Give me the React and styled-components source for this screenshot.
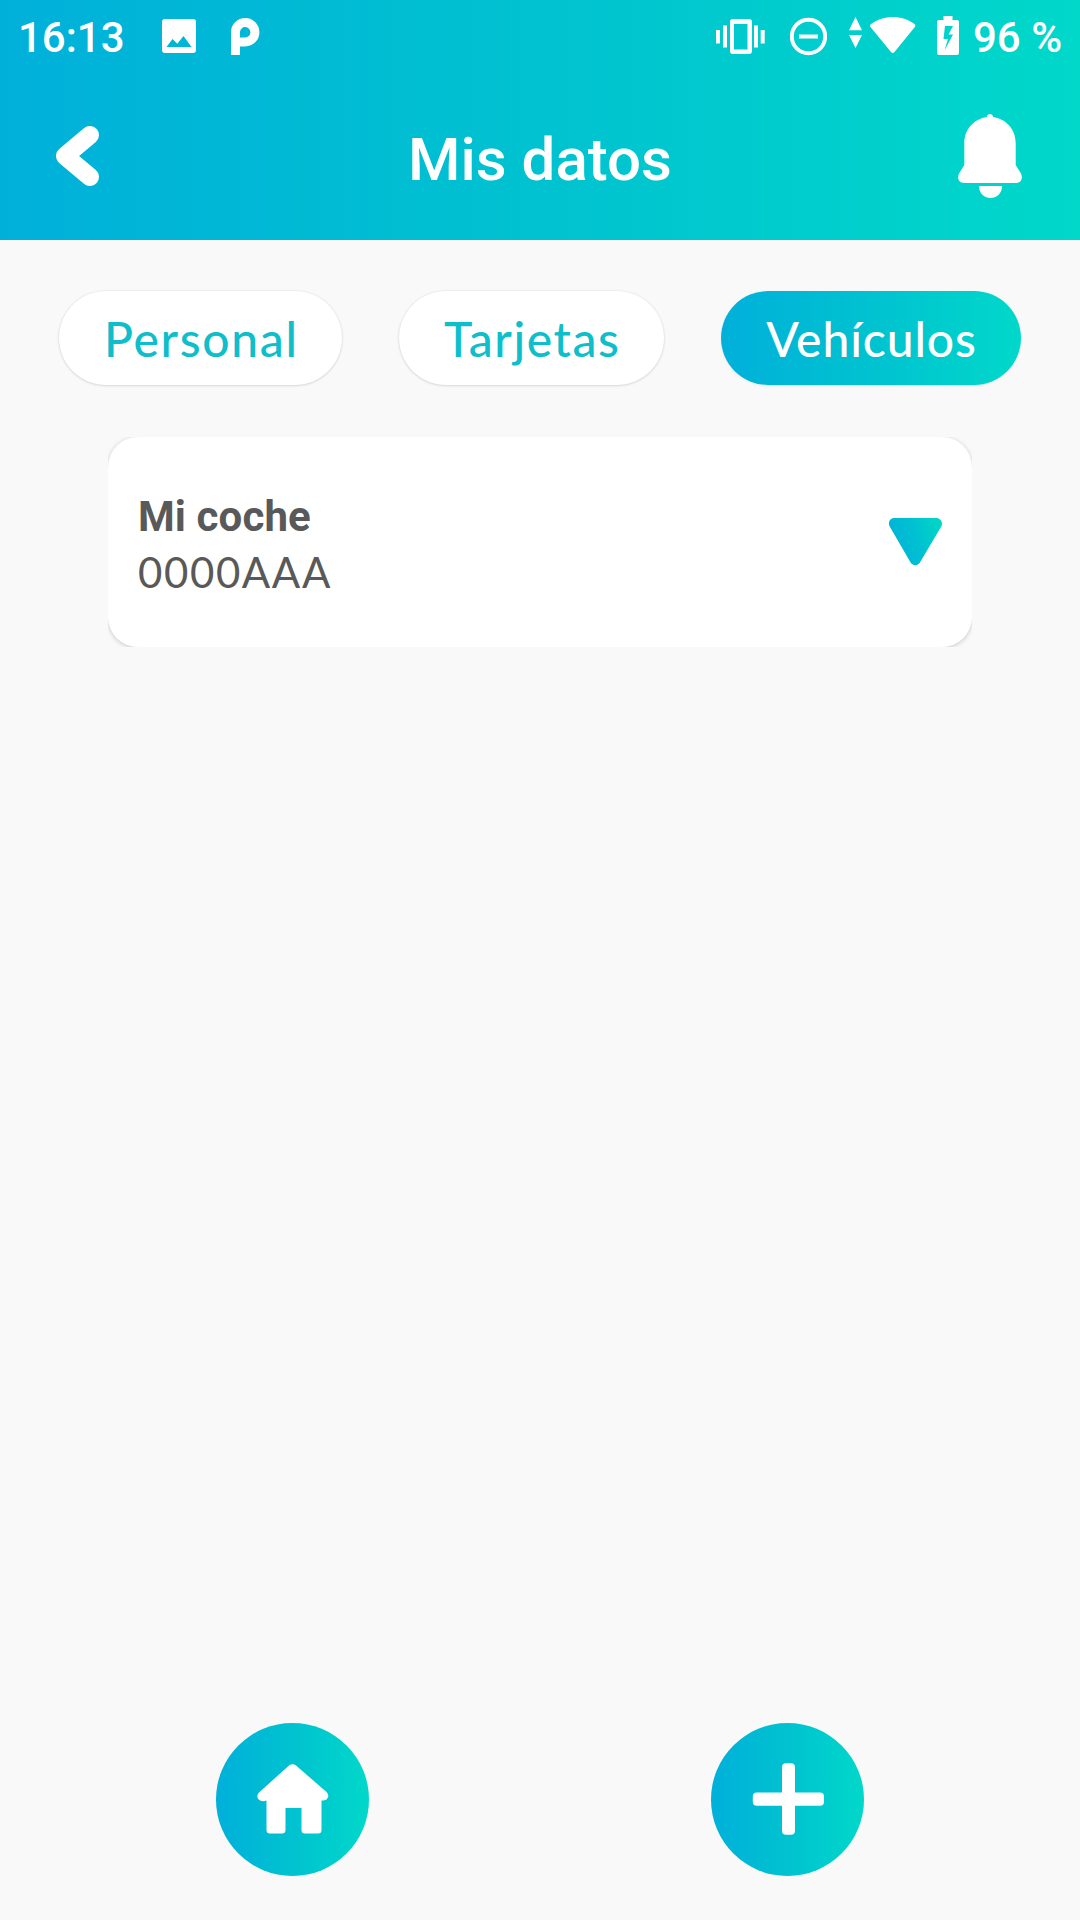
import React, { useState } from "react";
import styled, { createGlobalStyle } from "styled-components";

const gradient =
  "linear-gradient(90deg, #00b0da 0%, #00c2d0 50%, #00d8ca 100%)";

const GlobalStyle = createGlobalStyle`
  * {
    box-sizing: border-box;
  }

  body {
    margin: 0;
    background: #f9f9f9;
  }

  button {
    border: 0;
    padding: 0;
    background: none;
    font: inherit;
    cursor: pointer;
  }

  svg {
    display: block;
    flex: none;
  }
`;

const Screen = styled.div`
  display: flex;
  flex-direction: column;
  width: 1080px;
  height: 1920px;
  background: #f9f9f9;
  font-family: Roboto, sans-serif;
  overflow: hidden;
`;

const Header = styled.header`
  height: 240px;
  background: ${gradient};
  color: #fff;
`;

const StatusBar = styled.div`
  display: flex;
  height: 72px;
  padding: 0 19px 0 18px;
  justify-content: space-between;
`;

const StatusGroup = styled.div`
  display: flex;
  align-items: flex-start;
`;

const StatusText = styled.span`
  width: ${(props) => props.$width}px;
  line-height: 76px;
  font-size: 42px;
  font-weight: 500;
  white-space: nowrap;
`;

const StatusIcon = styled.svg`
  height: 72px;
  margin-left: ${(props) => props.$gap}px;
  fill: #fff;
`;

const TitleBar = styled.div`
  display: grid;
  grid-template-columns: 64px 1fr 64px;
  align-items: center;
  height: 168px;
  padding: 0 58px 0 56px;
`;

const Title = styled.h1`
  margin: 0;
  padding: 8px 0 0 2px;
  font-size: 60px;
  line-height: 70px;
  font-weight: 500;
  text-align: center;
`;

const Tabs = styled.nav`
  display: flex;
  gap: 57px;
  padding: 51px 59px 52px;
`;

const Tab = styled.button`
  width: ${(props) => props.$width}px;
  height: 94px;
  border-radius: 47px;
  background: ${(props) => (props.$active ? gradient : "#fff")};
  color: ${(props) => (props.$active ? "#fff" : "#0fbecb")};
  box-shadow: ${(props) =>
    props.$active
      ? "0 1px 3px rgba(0, 0, 0, 0.06)"
      : "0 0.5px 2.5px rgba(0, 0, 0, 0.2)"};

  span {
    display: block;
    padding-left: ${(props) => props.$spacing}px;
    font-family: Lato, sans-serif;
    font-size: 48px;
    font-weight: 500;
    line-height: 96px;
    letter-spacing: ${(props) => props.$spacing}px;
    white-space: nowrap;
  }
`;

const CardClip = styled.div`
  margin: 0 108px;
  overflow: hidden;
`;

const Card = styled.article`
  display: flex;
  align-items: center;
  justify-content: space-between;
  height: 210px;
  padding: 0 30px;
  border-radius: 30px;
  background: #fff;
  box-shadow: 0 1px 5px rgba(0, 0, 0, 0.2);
  color: #595959;
`;

const CardText = styled.div`
  padding-top: 5px;
`;

const CardName = styled.h2`
  margin: 0;
  font-size: 42px;
  line-height: 56px;
  font-weight: 700;
  letter-spacing: 0.1px;
`;

const CardPlate = styled.p`
  margin: 0;
  font-family: Lato, sans-serif;
  font-size: 42px;
  line-height: 55px;
  letter-spacing: 1.6px;
`;

const BottomBar = styled.footer`
  display: flex;
  justify-content: space-between;
  margin-top: auto;
  padding: 0 216px 44px;
`;

const RoundButton = styled.button`
  display: flex;
  width: 153px;
  height: 153px;
  align-items: center;
  justify-content: center;
  border-radius: 50%;
  background: ${gradient};
`;

const tabs = [
  { name: "Personal", width: 283, spacing: 1.7 },
  { name: "Tarjetas", width: 265, spacing: 1.6 },
  { name: "Vehículos", width: 300, spacing: 0.9 },
];

const BackIcon = () => (
  <svg width="44" height="60" viewBox="56 126 44 60">
    <path
      d="M90 135 65 156 90 177"
      fill="none"
      stroke="#fff"
      strokeWidth="18"
      strokeLinecap="round"
      strokeLinejoin="round"
    />
  </svg>
);

const BellIcon = () => (
  <svg width="64" height="84" viewBox="958 114 64 84" fill="#fff">
    <path d="M987 117C987 113 993 113 993 117C1006 119 1015.700 129 1015.700 143V165L1021 173.500C1023 178 1021.500 183 1016 183H964C958.500 183 957 178 959 173.500L964.300 165V143C964.300 129 974 119 987 117Z" />
    <path d="M979 186H1002C1002 202 979 202 979 186Z" />
  </svg>
);

const ArrowIcon = () => (
  <svg width="54" height="48" viewBox="0 0 54 48">
    <defs>
      <linearGradient id="arrow" x1="0" y1="0.5" x2="1" y2="0.2">
        <stop offset="0" stopColor="#00b3d8" />
        <stop offset="0.5" stopColor="#00c1d1" />
        <stop offset="1" stopColor="#00d7c4" />
      </linearGradient>
    </defs>
    <path
      d="M6.500 0H48C53 0 55.500 5 53 9L32.500 43.500C30 48.500 24.500 48.500 22 43.500L2 9C-.5 5 1.500 0 6.500 0Z"
      fill="url(#arrow)"
    />
  </svg>
);

const HomeIcon = () => (
  <svg width="72" height="72" viewBox="0 0 72 72" fill="#fff">
    <path d="M32 1.500Q35.500-1 39 1.500L69.500 28C73.500 32 70 37 66 36.500H64.500V66Q64.500 69.500 61 69.500H48Q44.500 69.500 44.500 66V44H28.500V66Q28.500 69.500 25 69.500H13Q9.500 69.500 9.500 66V36.500C3 39 -2 34 1.500 29Z" />
  </svg>
);

const PlusIcon = () => (
  <svg width="72" height="74" viewBox="0 0 72 74" fill="#fff">
    <rect x="30" y="0.300" width="13" height="71.500" rx="4" />
    <rect x="0.800" y="29.500" width="71.200" height="13.300" rx="4" />
  </svg>
);

const App = () => {
  const [activeTab, changeActiveTab] = useState("Vehículos");

  return (
    <Screen>
      <GlobalStyle />
      <Header>
        <StatusBar>
          <StatusGroup>
            <StatusText $width={108}>16:13</StatusText>
            <StatusIcon $gap={36} width="34" viewBox="162 0 34 72">
              <path
                fillRule="evenodd"
                d="M165 19H193Q196 19 196 22V50Q196 53 193 53H165Q162 53 162 50V22Q162 19 165 19ZM166.500 47H191.500L183.500 36L177.300 43.800L172.500 39Z"
              />
            </StatusIcon>
            <StatusIcon $gap={35} width="29" viewBox="231 0 29 72">
              <path
                fillRule="evenodd"
                d="M231 55V32A14.200 14.200 0 1 1 245.200 46.500H240V55ZM240 37.500H245.200A5.200 5.200 0 1 0 240 32Z"
              />
            </StatusIcon>
          </StatusGroup>
          <StatusGroup>
            <StatusIcon $gap={0} width="49" viewBox="716 0 49 72">
              <path
                fillRule="evenodd"
                d="M733 19H749Q752 19 752 22V51Q752 54 749 54H733Q730 54 730 51V22Q730 19 733 19ZM734 24V49.500H747.500V24Z"
              />
              <path d="M716 30H720V43.500H716ZM723 25.500H727V47.500H723ZM754 25.500H758V47.500H754ZM760.700 30H764.700V43.500H760.700Z" />
            </StatusIcon>
            <StatusIcon $gap={25} width="37" viewBox="790 0 37 72">
              <circle
                cx="808.500"
                cy="36.500"
                r="16.700"
                fill="none"
                stroke="#fff"
                strokeWidth="3.900"
              />
              <path d="M799 34.500H818V38.500H799Z" />
            </StatusIcon>
            <StatusIcon $gap={22} width="14" viewBox="849 0 14 72">
              <path d="M855.500 17 862 30.300H849ZM849 35H862L855.500 48Z" />
            </StatusIcon>
            <StatusIcon $gap={7} width="46" viewBox="870 0 46 72">
              <path d="M871 24C884 14.500 902 14.500 914.500 24Q916 25.500 914.800 27L894.500 52Q892.700 54 891 52L870.500 27Q869.500 25.300 871 24Z" />
            </StatusIcon>
            <StatusIcon $gap={21} width="22" viewBox="937 0 22 72">
              <path
                fillRule="evenodd"
                d="M943.500 16H952.500V20H957Q959 20 959 22V53Q959 55 957 55H939Q937 55 937 53V22Q937 20 939 20H943.500ZM945 26 943.500 39H948L944.500 50.500L953 34.500H948.500L953 26Z"
              />
            </StatusIcon>
            <StatusIcon $gap={0} width="14" viewBox="0 0 14 72" />
            <StatusText $width={88}>96 %</StatusText>
          </StatusGroup>
        </StatusBar>
        <TitleBar>
          <button aria-label="Volver">
            <BackIcon />
          </button>
          <Title>Mis datos</Title>
          <button aria-label="Notificaciones">
            <BellIcon />
          </button>
        </TitleBar>
      </Header>
      <Tabs>
        {tabs.map((tab) => {
          return (
            <Tab
              key={tab.name}
              $width={tab.width}
              $spacing={tab.spacing}
              $active={tab.name === activeTab}
              onClick={() => changeActiveTab(tab.name)}
            >
              <span>{tab.name}</span>
            </Tab>
          );
        })}
      </Tabs>
      <CardClip>
        <Card>
          <CardText>
            <CardName>Mi coche</CardName>
            <CardPlate>0000AAA</CardPlate>
          </CardText>
          <ArrowIcon />
        </Card>
      </CardClip>
      <BottomBar>
        <RoundButton aria-label="Inicio">
          <HomeIcon />
        </RoundButton>
        <RoundButton aria-label="Añadir">
          <PlusIcon />
        </RoundButton>
      </BottomBar>
    </Screen>
  );
};

export default App;
